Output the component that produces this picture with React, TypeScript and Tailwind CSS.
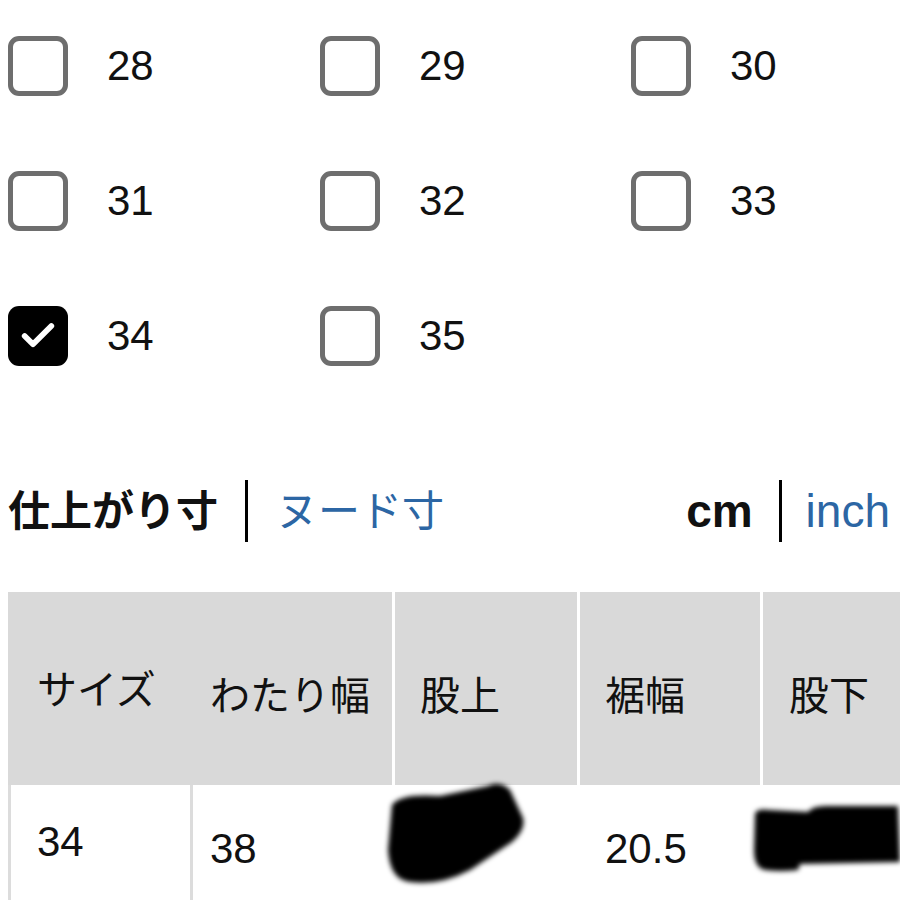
import { Check } from "lucide-react";

const sizes = [
  { label: "28", checked: false },
  { label: "29", checked: false },
  { label: "30", checked: false },
  { label: "31", checked: false },
  { label: "32", checked: false },
  { label: "33", checked: false },
  { label: "34", checked: true },
  { label: "35", checked: false },
];

const font = { fontFamily: '"Liberation Sans", "Noto Sans CJK JP", sans-serif' };

function SizeBox({ label, checked }: { label: string; checked: boolean }) {
  return (
    <div className="flex h-[135px] items-center gap-[39px]">
      {checked ? (
        <div className="flex h-[60px] w-[60px] items-center justify-center rounded-[11px] bg-black">
          <Check className="h-[40px] w-[40px] text-white" strokeWidth={3.4} />
        </div>
      ) : (
        <div className="h-[60px] w-[60px] rounded-[11px] border-[5px] border-[#6e6e6e] bg-white" />
      )}
      <span className="text-[42px] leading-none text-[#111]">{label}</span>
    </div>
  );
}

export default function App() {
  return (
    <div className="relative h-[900px] w-[900px] overflow-hidden bg-white" style={font}>
      <div className="-mt-[2px] grid grid-cols-[312px_311px_1fr] pl-2">
        {sizes.map((s) => (
          <SizeBox key={s.label} label={s.label} checked={s.checked} />
        ))}
      </div>

      <div className="mt-[77px] flex h-[62px] items-center pl-2 pr-[10px]">
        <span className="text-[42px] font-bold text-[#111]">仕上がり寸</span>
        <div className="ml-[27px] mr-[28px] h-[62px] w-[3px] bg-black" />
        <span className="text-[42px] text-[#2c66a4]">ヌード寸</span>
        <div className="flex-1" />
        <span className="text-[46px] font-bold text-[#111]">cm</span>
        <div className="ml-[26px] mr-[24px] h-[62px] w-[3px] bg-black" />
        <span className="text-[46px] text-[#2c66a4]">inch</span>
      </div>

      <div className="mt-[50px] ml-2">
        <div className="grid h-[193px] grid-cols-[182px_205px_185px_183px_1fr] bg-[#d9d9d9] text-[40px] text-[#111]">
          <div className="flex items-center pl-[29px] pt-[2px]">サイズ</div>
          <div className="flex items-center border-r-[3px] border-white pl-[20px] pt-[14px]">わたり幅</div>
          <div className="flex items-center border-r-[3px] border-white pl-[25px] pt-[14px]">股上</div>
          <div className="flex items-center border-r-[3px] border-white pl-[25px] pt-[14px]">裾幅</div>
          <div className="flex items-center pl-[26px] pt-[14px]">股下</div>
        </div>
        <div className="grid h-[120px] grid-cols-[182px_205px_185px_183px_1fr] border-l-[3px] border-[#dcdcdc] text-[42px] text-[#111]">
          <div className="border-r-[3px] border-[#dcdcdc] pl-[26px] pt-[36px] leading-none">34</div>
          <div className="pl-[17px] pt-[43px] leading-none">38</div>
          <div />
          <div className="pl-[22px] pt-[43px] leading-none">20.5</div>
          <div />
        </div>
      </div>

      <svg className="pointer-events-none absolute left-0 top-0" width="900" height="900" viewBox="0 0 900 900">
        <defs>
          <filter id="soft" x="-10%" y="-10%" width="120%" height="120%">
            <feGaussianBlur stdDeviation="2.5" />
          </filter>
        </defs>
        <g filter="url(#soft)" fill="#050505">
          <path d="M392 805 Q400 793 440 796 L488 786 Q500 780 510 790 L523 818 Q526 830 512 842 L470 870 Q440 886 410 882 Q390 880 388 850 Z" />
          <path d="M755 814 Q756 808 770 810 L808 812 Q812 806 826 806 L898 806 L900 862 L800 864 L798 870 Q780 872 765 870 Q754 868 754 850 Z" />
        </g>
      </svg>
    </div>
  );
}
